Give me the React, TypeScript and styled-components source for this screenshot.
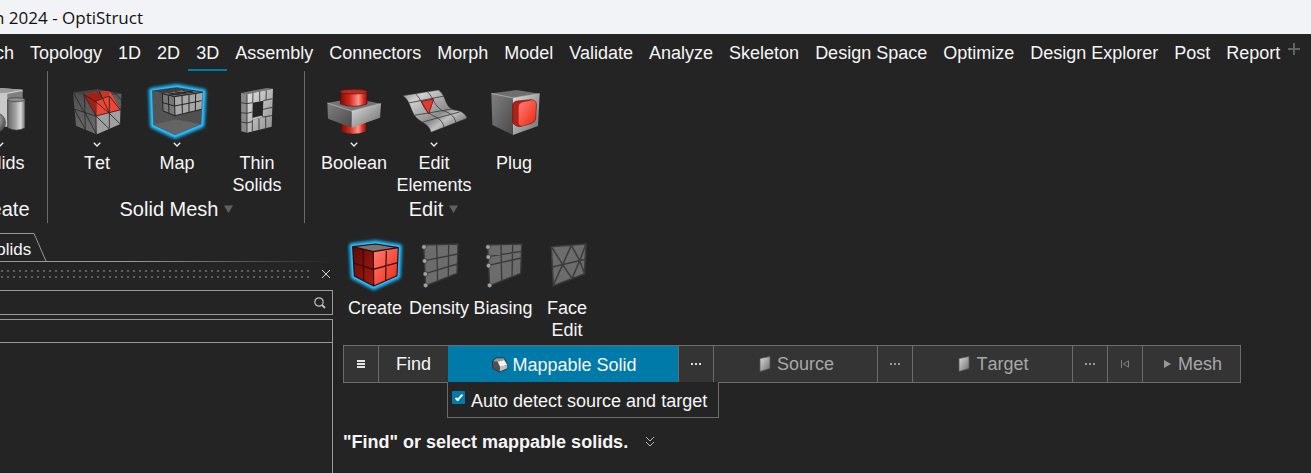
import React from "react";
import styled, { createGlobalStyle } from "styled-components";

const C = {
  bg: "#242424",
  text: "#f6f6f6",
  dim: "#a8a8a8",
  line: "#6c6c6c",
  panelLine: "#999999",
  cell: "#343434",
  accent: "#007aa9",
};

const Global = createGlobalStyle`
  *, *::before, *::after { box-sizing: border-box; }
  body {
    margin: 0;
    background: ${C.bg};
    color: ${C.text};
    font-family: "Liberation Sans", Arial, sans-serif;
    font-size: 18px;
    font-kerning: none;
    line-height: 22px;
  }
  button, input { font: inherit; font-kerning: inherit; color: inherit; margin: 0; }
  svg { display: block; flex: none; }
`;

const Window = styled.div`
  display: flex;
  flex-direction: column;
  min-height: 100vh;
  overflow: hidden;
`;

const TitleBar = styled.header`
  height: 34px;
  padding-top: 6px;
  background: #f2f3f6;
  color: #111;
  font-family: "Open Sans", sans-serif;
  font-size: 17px;
  font-kerning: normal;
  line-height: 24px;
  white-space: pre;
`;

const TitleText = styled.span`
  margin-left: -6px;
`;

const MenuBar = styled.nav`
  display: flex;
  align-items: flex-start;
  height: 37px;
  margin-left: -49px;
  font-kerning: normal;
`;

const Tab = styled.button<{ $active?: boolean }>`
  flex: none;
  height: 37px;
  padding: 2px 8px 0;
  border: 0;
  border-bottom: 2px solid ${(p) => (p.$active ? C.accent : "transparent")};
  background: none;
  white-space: nowrap;
`;

const AddTab = styled.button`
  padding: 9px 0 0;
  border: 0;
  background: none;
`;

const Ribbon = styled.div`
  display: flex;
  height: 152px;
  margin-left: -49px;
`;

const Group = styled.section`
  display: flex;
  flex: none;
  flex-direction: column;
  padding: 12px 7px 0 9px;
  & + & { border-left: 1px solid ${C.line}; }
`;

const Tools = styled.div`
  display: flex;
  height: 115px;
`;

const Tool = styled.button<{ $wide?: boolean }>`
  display: flex;
  flex: none;
  flex-direction: column;
  align-items: center;
  justify-content: flex-start;
  width: ${(p) => (p.$wide ? 80 : 64)}px;
  padding: 0;
  border: 0;
  background: none;
  text-align: center;
`;

const Chevron = styled.span`
  display: flex;
  justify-content: center;
  height: 13px;
  padding-top: 3px;
`;

const Caption = styled.div`
  display: flex;
  align-items: center;
  justify-content: center;
  gap: 6px;
  padding-right: 1px;
  font-size: 20px;
  line-height: 22px;
`;

const Workspace = styled.main`
  display: flex;
  flex: 1;
  align-items: stretch;
`;

const Browser = styled.aside`
  display: flex;
  flex: 0 0 333px;
  flex-direction: column;
  padding-top: 10px;
`;

const PanelTabRow = styled.div`
  display: flex;
  height: 28px;
`;

const PanelTab = styled.button`
  padding: 4px 2px 0 0;
  margin-left: -15px;
  border: 0;
  border-top: 1px solid ${C.panelLine};
  background: none;
  font-size: 17px;
`;

const FadeLine = styled.div`
  height: 1px;
  background: linear-gradient(90deg, ${C.panelLine} 40%, transparent);
`;

const GripRow = styled.div`
  display: flex;
  align-items: center;
  gap: 11px;
  height: 28px;
  padding: 0 2px 4px 1px;
`;

const Grip = styled.div`
  flex: 1;
  height: 8px;
  background:
    repeating-linear-gradient(90deg, #5e5e5e 0 2px, transparent 2px 6px) top / 100% 2px no-repeat,
    repeating-linear-gradient(90deg, #5e5e5e 0 2px, transparent 2px 6px) bottom / 100% 2px no-repeat;
`;

const IconButton = styled.button`
  padding: 0;
  border: 0;
  background: none;
`;

const Search = styled.label`
  display: flex;
  align-items: center;
  height: 25px;
  padding-right: 6px;
  border: 1px solid ${C.panelLine};
  border-left: 0;
`;

const SearchInput = styled.input`
  flex: 1;
  min-width: 0;
  height: 22px;
  border: 0;
  outline: 0;
  background: none;
`;

const List = styled.div`
  flex: 1;
  margin-top: 4px;
  border: 1px solid ${C.panelLine};
  border-width: 1px 1px 0 0;
`;

const ListHead = styled.div`
  height: 23px;
  border-bottom: 1px solid ${C.panelLine};
`;

const Editor = styled.section`
  display: flex;
  flex: 1;
  flex-direction: column;
  align-items: flex-start;
  padding: 10px 0 0 10px;
`;

const ModeRow = styled.div`
  display: flex;
  height: 112px;
`;

const GuideBar = styled.div`
  display: flex;
  height: 38px;
  border: 1px solid ${C.line};
  border-left: 0;
`;

const Cell = styled.button<{ $w: number; $active?: boolean; $dim?: boolean }>`
  display: flex;
  flex: 0 0 ${(p) => p.$w}px;
  align-items: center;
  justify-content: center;
  gap: ${(p) => (p.$active ? 4 : 6)}px;
  padding: ${(p) => (p.$active ? "2px 0 0 2px" : p.$dim ? "0 0 0 2px" : "0")};
  border: 0;
  border-left: 1px solid ${(p) => (p.$active ? C.accent : C.line)};
  background: ${(p) => (p.$active ? C.accent : C.cell)};
  color: ${(p) => (p.$dim ? C.dim : C.text)};
  white-space: nowrap;
`;

const Options = styled.label`
  display: flex;
  align-items: center;
  gap: 6px;
  height: 36px;
  margin: -1px 0 0 104px;
  padding: 2px 11px 0 4px;
  border: 1px solid ${C.line};
  border-top: 0;
  background: ${C.bg};
`;

const Check = styled.input`
  display: grid;
  place-items: center;
  appearance: none;
  width: 13px;
  height: 13px;
  margin-bottom: 6px;
  border-radius: 1px;
  background: #1a6f93;
  &:checked { background: ${C.accent}; }
  &:checked::after {
    content: "";
    width: 4px;
    height: 8px;
    margin-bottom: 2px;
    border: solid #fff;
    border-width: 0 2px 2px 0;
    transform: rotate(42deg);
  }
`;

const Hint = styled.p`
  display: flex;
  align-items: center;
  gap: 17px;
  margin: 13px 0 0;
  font-weight: bold;
`;

type ArtProps = { x: number; y: number; h?: number; children: React.ReactNode };

/* Tool artwork is drawn on a grid of three units per pixel. */
const Art = ({ x, y, h = 56, children }: ArtProps) => (
  <svg width="64" height={h} viewBox={`${x} ${y} 192 ${h * 3}`} overflow="visible" aria-hidden="true">
    {children}
  </svg>
);

const Defs = styled.svg`
  position: absolute;
`;

const Gradients = () => (
  <Defs width="0" height="0" aria-hidden="true">
    <defs>
      <linearGradient id="steel" x1="0" y1="0" x2="1" y2="1">
        <stop offset="0" stopColor="#dedede" />
        <stop offset="1" stopColor="#6b6b6b" />
      </linearGradient>
      <linearGradient id="pale" x1="0" y1="0" x2="1" y2="1">
        <stop offset="0" stopColor="#e2e2e2" />
        <stop offset="1" stopColor="#8c8c8c" />
      </linearGradient>
      <linearGradient id="dark" x1="0" y1="0" x2="0" y2="1">
        <stop offset="0" stopColor="#4d4d4d" />
        <stop offset="1" stopColor="#6c6c6c" />
      </linearGradient>
      <linearGradient id="mid" x1="0" y1="0" x2="1" y2="1">
        <stop offset="0" stopColor="#808080" />
        <stop offset="1" stopColor="#4a4a4a" />
      </linearGradient>
      <linearGradient id="tube" x1="0" y1="0" x2="1" y2="0">
        <stop offset="0" stopColor="#666" />
        <stop offset="0.45" stopColor="#a2a2a2" />
        <stop offset="0.75" stopColor="#d8d8d8" />
        <stop offset="1" stopColor="#707070" />
      </linearGradient>
      <linearGradient id="redTube" x1="0" y1="0" x2="1" y2="0">
        <stop offset="0" stopColor="#7a0c04" />
        <stop offset="0.35" stopColor="#d32a1c" />
        <stop offset="0.68" stopColor="#ff948a" />
        <stop offset="0.85" stopColor="#dd3529" />
        <stop offset="1" stopColor="#8d140b" />
      </linearGradient>
      <linearGradient id="red" x1="0" y1="0" x2="1" y2="1">
        <stop offset="0" stopColor="#ff8075" />
        <stop offset="1" stopColor="#ee2510" />
      </linearGradient>
      <linearGradient id="deepRed" x1="0" y1="0" x2="1" y2="1">
        <stop offset="0" stopColor="#5c0b07" />
        <stop offset="1" stopColor="#a81a10" />
      </linearGradient>
      <linearGradient id="sheet" x1="0" y1="0" x2="1" y2="0.9">
        <stop offset="0" stopColor="#888" />
        <stop offset="0.22" stopColor="#d0d0d0" />
        <stop offset="0.45" stopColor="#a6a6a6" />
        <stop offset="0.6" stopColor="#8c8c8c" />
        <stop offset="0.72" stopColor="#c0c0c0" />
        <stop offset="1" stopColor="#5a5a5a" />
      </linearGradient>
      <radialGradient id="ball" cx="0.4" cy="0.35" r="0.6">
        <stop offset="0" stopColor="#d0d0d0" />
        <stop offset="1" stopColor="#555" />
      </radialGradient>
      <filter id="halo" x="-20%" y="-20%" width="140%" height="140%">
        <feGaussianBlur stdDeviation="5" />
      </filter>
    </defs>
  </Defs>
);

const Glow = ({ points }: { points: string }) => (
  <g fill="none" stroke="#19b8fb" strokeLinejoin="round">
    <polygon points={points} strokeWidth="20" filter="url(#halo)" />
    <polygon points={points} strokeWidth="9" stroke="#24bcff" />
  </g>
);

const SolidsArt = () => (
  <Art x={-96} y={39}>
    <path d="M-60 66 L0 54 L68 59 V66 L52 70 V170 L-50 170Z" fill="#c9c9c9" />
    <path d="M-60 66 L0 54 L68 59 L20 68 L-50 72Z" fill="#9b9b9b" />
    <path d="M22 72 L68 63 V150 H22Z" fill="#7f7f7f" />
    <circle cx="-12" cy="158" r="29" fill="url(#ball)" stroke="#333" />
    <path d="M23 89 V174 Q49 187 75 174 V89Z" fill="url(#tube)" stroke="#333" strokeWidth="2" />
    <ellipse cx="49" cy="89" rx="26" ry="6" fill="#8d8d8d" stroke="#3a3a3a" strokeWidth="2" />
  </Art>
);

const TetArt = () => (
  <Art x={195} y={39}>
    <polygon points="219,66 292,56 366,70 290,83" fill="#444" />
    <polygon points="219,66 290,83 290,193 228,167" fill="url(#dark)" />
    <polygon points="290,83 366,70 361,162 290,193" fill="#5d5d5d" />
    <polygon points="288,137 362,118 361,162 290,193" fill="#a0a0a0" />
    <polygon points="250,73 298,65 330,64 362,121 288,138" fill="#f04434" />
    <polygon points="250,73 298,65 306,84 286,94 288,138" fill="#a12118" />
    <polygon points="298,65 330,64 326,78 306,84" fill="#c5372b" />
    <g fill="none" stroke="#242424" strokeWidth="2.500">
      <path d="M219 66 L292 56 L366 70 M222 117 L288 138 L363 119 M288 94 V193 M328 78 V176 M253 74 L256 178 M219 66 L252 126 M223 118 L256 178 M253 75 L288 138 M255 128 L290 193 M288 138 L327 176 M327 129 L361 162 M328 78 L362 121 M298 65 L328 129 M286 94 L327 129 M250 73 L286 94 L328 78 M298 65 L306 84 M340 64 L366 92 M366 70 L361 162" />
    </g>
  </Art>
);

const MapArt = () => (
  <Art x={435} y={39}>
    <Glow points="456,63 530,52 609,66 604,164 525,196 460,166" />
    <polygon points="456,63 530,53 609,66 523,80" fill="#3f3f3f" />
    <polygon points="456,63 523,80 525,195 460,165" fill="#545454" />
    <polygon points="523,80 609,66 604,163 525,195" fill="#505050" />
    <polygon points="460,165 526,148 604,163 525,195" fill="#646464" />
    <polygon points="487,71 523,80 525,137 489,123" fill="#787878" />
    <polygon points="523,80 608,67 604,118 525,137" fill="#a8a8a8" />
    <polygon points="487,71 550,60 608,67 523,80" fill="#6c6c6c" />
    <g fill="none" stroke="#242424" strokeWidth="3">
      <path d="M487 71 L489 123 L525 137 L604 118 M505 76 L507 130 M523 80 L525 137 M546 77 L547 131 M567 74 V127 M587 71 L586 122 M488 98 L524 108 L605 92 M487 71 L523 80 L608 67 M505 76 L580 63 M546 77 L505 68 M567 74 L525 65 M587 71 L548 61" />
    </g>
    <path d="M456 63 L530 53 L609 66" fill="none" stroke="#2b2b2b" strokeWidth="2" />
  </Art>
);

const ThinArt = () => (
  <Art x={675} y={39}>
    <polygon points="723,69 800,54 819,56 741,73" fill="#777" />
    <polygon points="723,69 741,73 741,188 724,184" fill="#8a8a8a" />
    <path d="M741 73 L819 56 L815 170 L741 188Z M758 98 L757 150 L788 141 L790 92Z" fill="url(#pale)" fillRule="evenodd" />
    <path d="M757 150 L788 141 L784 137 L757 144Z" fill="#c4c4c4" />
    <g fill="none" stroke="#2c2c2c" strokeWidth="2.500">
      <path d="M741 73 V188 M723 98 L741 101 L758 98 M723 128 L741 130 L757 126 M724 156 L741 159 L757 155 M759 69 L758 98 M779 65 V94 M799 61 L798 90 M790 92 L817 86 M789 118 L817 112 M788 141 L816 137 M757 150 V184 M777 145 V179 M797 140 V174" />
    </g>
  </Art>
);

const BooleanArt = () => (
  <Art x={66} y={39}>
    <path d="M124 155 V184 Q161 199 198 184 V155Z" fill="url(#redTube)" />
    <polygon points="82,99 160,85 243,101 155,123" fill="#747474" />
    <polygon points="82,99 155,123 155,173 84,146" fill="url(#mid)" />
    <polygon points="155,123 243,101 240,143 155,173" fill="url(#steel)" />
    <path d="M82 99 L155 123 L243 101" fill="none" stroke="#d0d0d0" strokeWidth="2" />
    <path d="M121 66 V102 Q161 116 201 102 V66Z" fill="url(#redTube)" stroke="#55100b" strokeWidth="2" />
    <ellipse cx="161" cy="65" rx="40" ry="7" fill="#b92c21" stroke="#601009" strokeWidth="2" />
  </Art>
);

const SheetArt = () => (
  <Art x={306} y={39}>
    <path d="M308 77 L415 60 C440 76 432 110 462 120 C482 122 497 130 501 145 L393 187 C388 160 358 158 343 136 C330 112 328 88 308 77Z" fill="url(#sheet)" stroke="#333" strokeWidth="1.500" />
    <path d="M346 71 C366 88 364 108 386 129 C408 144 426 144 432 171 M382 65 C402 84 400 104 425 121 C450 128 462 136 468 158 M325 99 L433 78 M343 136 L456 117 M368 156 L478 126" fill="none" stroke="#3a3a3a" strokeWidth="2.500" />
    <path d="M364 94 L401 87 L386 132Z" fill="#e23b2c" stroke="#6a120b" strokeWidth="2.500" />
  </Art>
);

const PlugArt = () => (
  <Art x={546} y={39}>
    <polygon points="574,70 650,60 719,71 639,84" fill="#6f6f6f" />
    <polygon points="574,70 639,84 639,195 577,165" fill="url(#mid)" />
    <polygon points="639,84 719,71 714,168 639,195" fill="url(#steel)" />
    <path d="M574 70 L639 84 L719 71" fill="none" stroke="#ccc" strokeWidth="2" />
    <path d="M652 93 L694 89 Q709 90 709 104 L707 145 Q706 156 694 160 L664 169 Q654 171 646 166 Q638 162 638 152 V108 Q638 94 652 93Z" fill="#b22117" stroke="#5f130d" strokeWidth="2" />
    <path d="M669 97 L695 91 Q708 90 708 104 L706 144 Q705 154 695 158 L669 167 Q656 170 656 156 V112 Q656 100 669 97Z" fill="url(#red)" />
  </Art>
);

const CreateArt = () => (
  <Art x={24} y={9} h={64}>
    <Glow points="52,49 122,41 191,52 187,138 116,170 57,139" />
    <polygon points="53,50 122,42 190,53 115,65" fill="#777" />
    <polygon points="53,50 115,65 116,168 58,138" fill="url(#deepRed)" />
    <polygon points="115,65 190,53 186,137 116,168" fill="url(#red)" />
    <path d="M53 50 L122 42 L190 53 L186 137 L116 168 L58 138Z M53 50 L115 65 L190 53 M115 65 L116 168 M84 58 L86 152 M154 59 L152 152 M56 99 L115 118 L188 98" fill="none" stroke="#350705" strokeWidth="3.500" strokeLinejoin="round" />
  </Art>
);

const Nodes = ({ points }: { points: number[][] }) => (
  <g fill="#a3a3a3" stroke="#303030" strokeWidth="2">
    {points.map(([cx, cy]) => (
      <circle key={cy} cx={cx} cy={cy} r="7" />
    ))}
  </g>
);

const DensityArt = () => (
  <Art x={216} y={9} h={64}>
    <polygon points="266,45 369,42 366,130 272,167" fill="#6c6c6c" />
    <path d="M266 45 L369 42 L366 130 L272 167Z M305 46 L308 152 M341 44 L340 140 M268 92 L368 72 M270 131 L367 102" fill="none" stroke="#3a3a3a" strokeWidth="4" />
    <Nodes points={[[267, 51], [269, 93], [271, 132], [272, 166]]} />
  </Art>
);

const BiasingArt = () => (
  <Art x={408} y={9} h={64}>
    <polygon points="458,45 560,42 557,130 464,167" fill="#6c6c6c" />
    <path d="M458 45 L560 42 L557 130 L464 167Z M498 46 L500 152 M533 44 L531 140 M459 80 L559 64 M460 106 L559 84" fill="none" stroke="#3a3a3a" strokeWidth="4" />
    <Nodes points={[[459, 51], [460, 81], [461, 107], [464, 166]]} />
  </Art>
);

const FaceArt = () => (
  <Art x={600} y={9} h={64}>
    <polygon points="649,50 753,42 748,132 655,167" fill="#6c6c6c" />
    <path d="M649 50 L753 42 L748 132 L655 167Z M652 111 L751 88 M651 52 L683 104 L711 146 M709 46 L683 104 L655 165 M709 46 L734 92 L748 130 M752 44 L734 92 L711 146" fill="none" stroke="#3c3c3c" strokeWidth="4.500" />
  </Art>
);

const DownChevron = () => (
  <svg width="8" height="6" viewBox="0 0 8 6" fill="none" stroke="#f0f0f0" strokeWidth="1.300" aria-hidden="true">
    <path d="M0.800 0.800 L4 4 L7.200 0.800" />
  </svg>
);

const Triangle = () => (
  <svg width="9" height="8" viewBox="0 0 9 8" fill="#606060" aria-hidden="true">
    <path d="M0 0.500 H9 L4.500 8Z" />
  </svg>
);

const Dots = ({ color }: { color: string }) => (
  <svg width="10" height="2" viewBox="0 0 10 2" fill={color} aria-hidden="true">
    <path d="M0 0h2v2h-2z M4 0h2v2h-2z M8 0h2v2h-2z" />
  </svg>
);

const FaceGlyph = () => (
  <svg width="12" height="16" viewBox="0 0 12 16" aria-hidden="true">
    <path d="M1 2.500 L11 0.500 V12.500 L1 15.500Z" fill="url(#steel)" stroke="#555" strokeWidth="0.800" />
  </svg>
);

const SolidGlyph = () => (
  <svg width="16" height="16" viewBox="0 0 16 16" aria-hidden="true">
    <path d="M0.500 4 L4 1 L12 1 L15.500 8 V11.500 L7.500 15 L1 11.500Z" fill="#555" stroke="#222" strokeWidth="0.800" />
    <path d="M1 4.500 L4 1.500 L12 1.300 L12.500 3 L5.500 4.800Z" fill="#999" />
    <path d="M5.500 4.800 L12.300 3 L15.300 8 L8 10Z" fill="#f2f2f2" />
    <path d="M8 10 L15.300 8 V11.300 L7.700 14.500Z" fill="#c0c0c0" />
    <path d="M1 4.500 L5.500 4.800 L8 10 L7.700 14.500 L1.300 11.200Z" fill="#505050" />
  </svg>
);

const tabs = [
  "Sketch", "Topology", "1D", "2D", "3D", "Assembly", "Connectors", "Morph", "Model",
  "Validate", "Analyze", "Skeleton", "Design Space", "Optimize", "Design Explorer", "Post", "Report",
];

type ToolDef = { label: string; art: React.ReactNode; menu?: boolean };

const groups: { name: string; more: boolean; tools: ToolDef[] }[] = [
  { name: "Create", more: false, tools: [{ label: "Solids", art: <SolidsArt />, menu: true }] },
  {
    name: "Solid Mesh",
    more: true,
    tools: [
      { label: "Tet", art: <TetArt />, menu: true },
      { label: "Map", art: <MapArt />, menu: true },
      { label: "Thin Solids", art: <ThinArt /> },
    ],
  },
  {
    name: "Edit",
    more: true,
    tools: [
      { label: "Boolean", art: <BooleanArt />, menu: true },
      { label: "Edit Elements", art: <SheetArt />, menu: true },
      { label: "Plug", art: <PlugArt /> },
    ],
  },
];

const modes: ToolDef[] = [
  { label: "Create", art: <CreateArt /> },
  { label: "Density", art: <DensityArt /> },
  { label: "Biasing", art: <BiasingArt /> },
  { label: "Face Edit", art: <FaceArt /> },
];

export default function App() {
  return (
    <Window>
      <Global />
      <Gradients />
      <TitleBar>
        <TitleText>n 2024 - OptiStruct</TitleText>
      </TitleBar>
      <MenuBar>
        {tabs.map((t) => (
          <Tab key={t} $active={t === "3D"}>{t}</Tab>
        ))}
        <AddTab aria-label="Add ribbon">
          <svg width="12" height="12" viewBox="0 0 12 12" fill="#626262" aria-hidden="true">
            <path d="M5 0h2v5h5v2h-5v5h-2v-5h-5v-2h5z" />
          </svg>
        </AddTab>
      </MenuBar>
      <Ribbon>
        {groups.map((g) => (
          <Group key={g.name}>
            <Tools>
              {g.tools.map((t) => (
                <Tool key={t.label} $wide>
                  {t.art}
                  <Chevron>{t.menu && <DownChevron />}</Chevron>
                  <span>{t.label}</span>
                </Tool>
              ))}
            </Tools>
            <Caption>
              {g.name}
              {g.more && <Triangle />}
            </Caption>
          </Group>
        ))}
      </Ribbon>
      <Workspace>
        <Browser>
          <PanelTabRow>
            <PanelTab>Solids</PanelTab>
            <svg width="14" height="28" viewBox="0 0 14 28" fill="none" stroke={C.panelLine} aria-hidden="true">
              <path d="M0 0.500 H1 L13 28" />
            </svg>
          </PanelTabRow>
          <FadeLine />
          <GripRow>
            <Grip />
            <IconButton aria-label="Close panel">
              <svg width="10" height="10" viewBox="0 0 10 10" stroke="#d0d0d0" aria-hidden="true">
                <path d="M1 1 L9 9 M9 1 L1 9" />
              </svg>
            </IconButton>
          </GripRow>
          <Search>
            <SearchInput type="text" aria-label="Search" />
            <svg width="12" height="12" viewBox="0 0 12 12" fill="none" stroke="#c0c0c0" aria-hidden="true">
              <circle cx="5" cy="5" r="4.200" strokeWidth="1.200" />
              <path d="M8 8 L11 11" strokeWidth="1.800" />
            </svg>
          </Search>
          <List>
            <ListHead />
          </List>
        </Browser>
        <Editor>
          <ModeRow>
            {modes.map((m) => (
              <Tool key={m.label}>
                {m.art}
                <span>{m.label}</span>
              </Tool>
            ))}
          </ModeRow>
          <GuideBar>
            <Cell $w={35} aria-label="Options">
              <svg width="8" height="8" viewBox="0 0 8 8" fill="#e4e4e4" aria-hidden="true">
                <path d="M0 0h8v2h-8z M0 3h8v2h-8z M0 6h8v2h-8z" />
              </svg>
            </Cell>
            <Cell $w={70}>Find</Cell>
            <Cell $w={230} $active><SolidGlyph />Mappable Solid</Cell>
            <Cell $w={35} aria-label="More solid options"><Dots color="#dcdcdc" /></Cell>
            <Cell $w={164} $dim><FaceGlyph />Source</Cell>
            <Cell $w={35} aria-label="More source options"><Dots color="#999" /></Cell>
            <Cell $w={160} $dim><FaceGlyph />Target</Cell>
            <Cell $w={35} aria-label="More target options"><Dots color="#999" /></Cell>
            <Cell $w={35} aria-label="Reset">
              <svg width="8" height="8" viewBox="0 0 8 8" fill="none" stroke="#808080" aria-hidden="true">
                <path d="M0.500 0 V8 M7.500 0.800 V7.200 L2.500 4Z" />
              </svg>
            </Cell>
            <Cell $w={98} $dim>
              <svg width="9" height="8" viewBox="0 0 9 8" fill="#999" aria-hidden="true">
                <path d="M1 0 L8 4 L1 8Z" />
              </svg>
              Mesh
            </Cell>
          </GuideBar>
          <Options>
            <Check type="checkbox" defaultChecked />
            Auto detect source and target
          </Options>
          <Hint>
            "Find" or select mappable solids.
            <svg width="10" height="12" viewBox="0 0 10 12" fill="none" stroke="#b8b8b8" aria-hidden="true">
              <path d="M1 1 L5 5 L9 1 M1 6 L5 10 L9 6" />
            </svg>
          </Hint>
        </Editor>
      </Workspace>
    </Window>
  );
}
